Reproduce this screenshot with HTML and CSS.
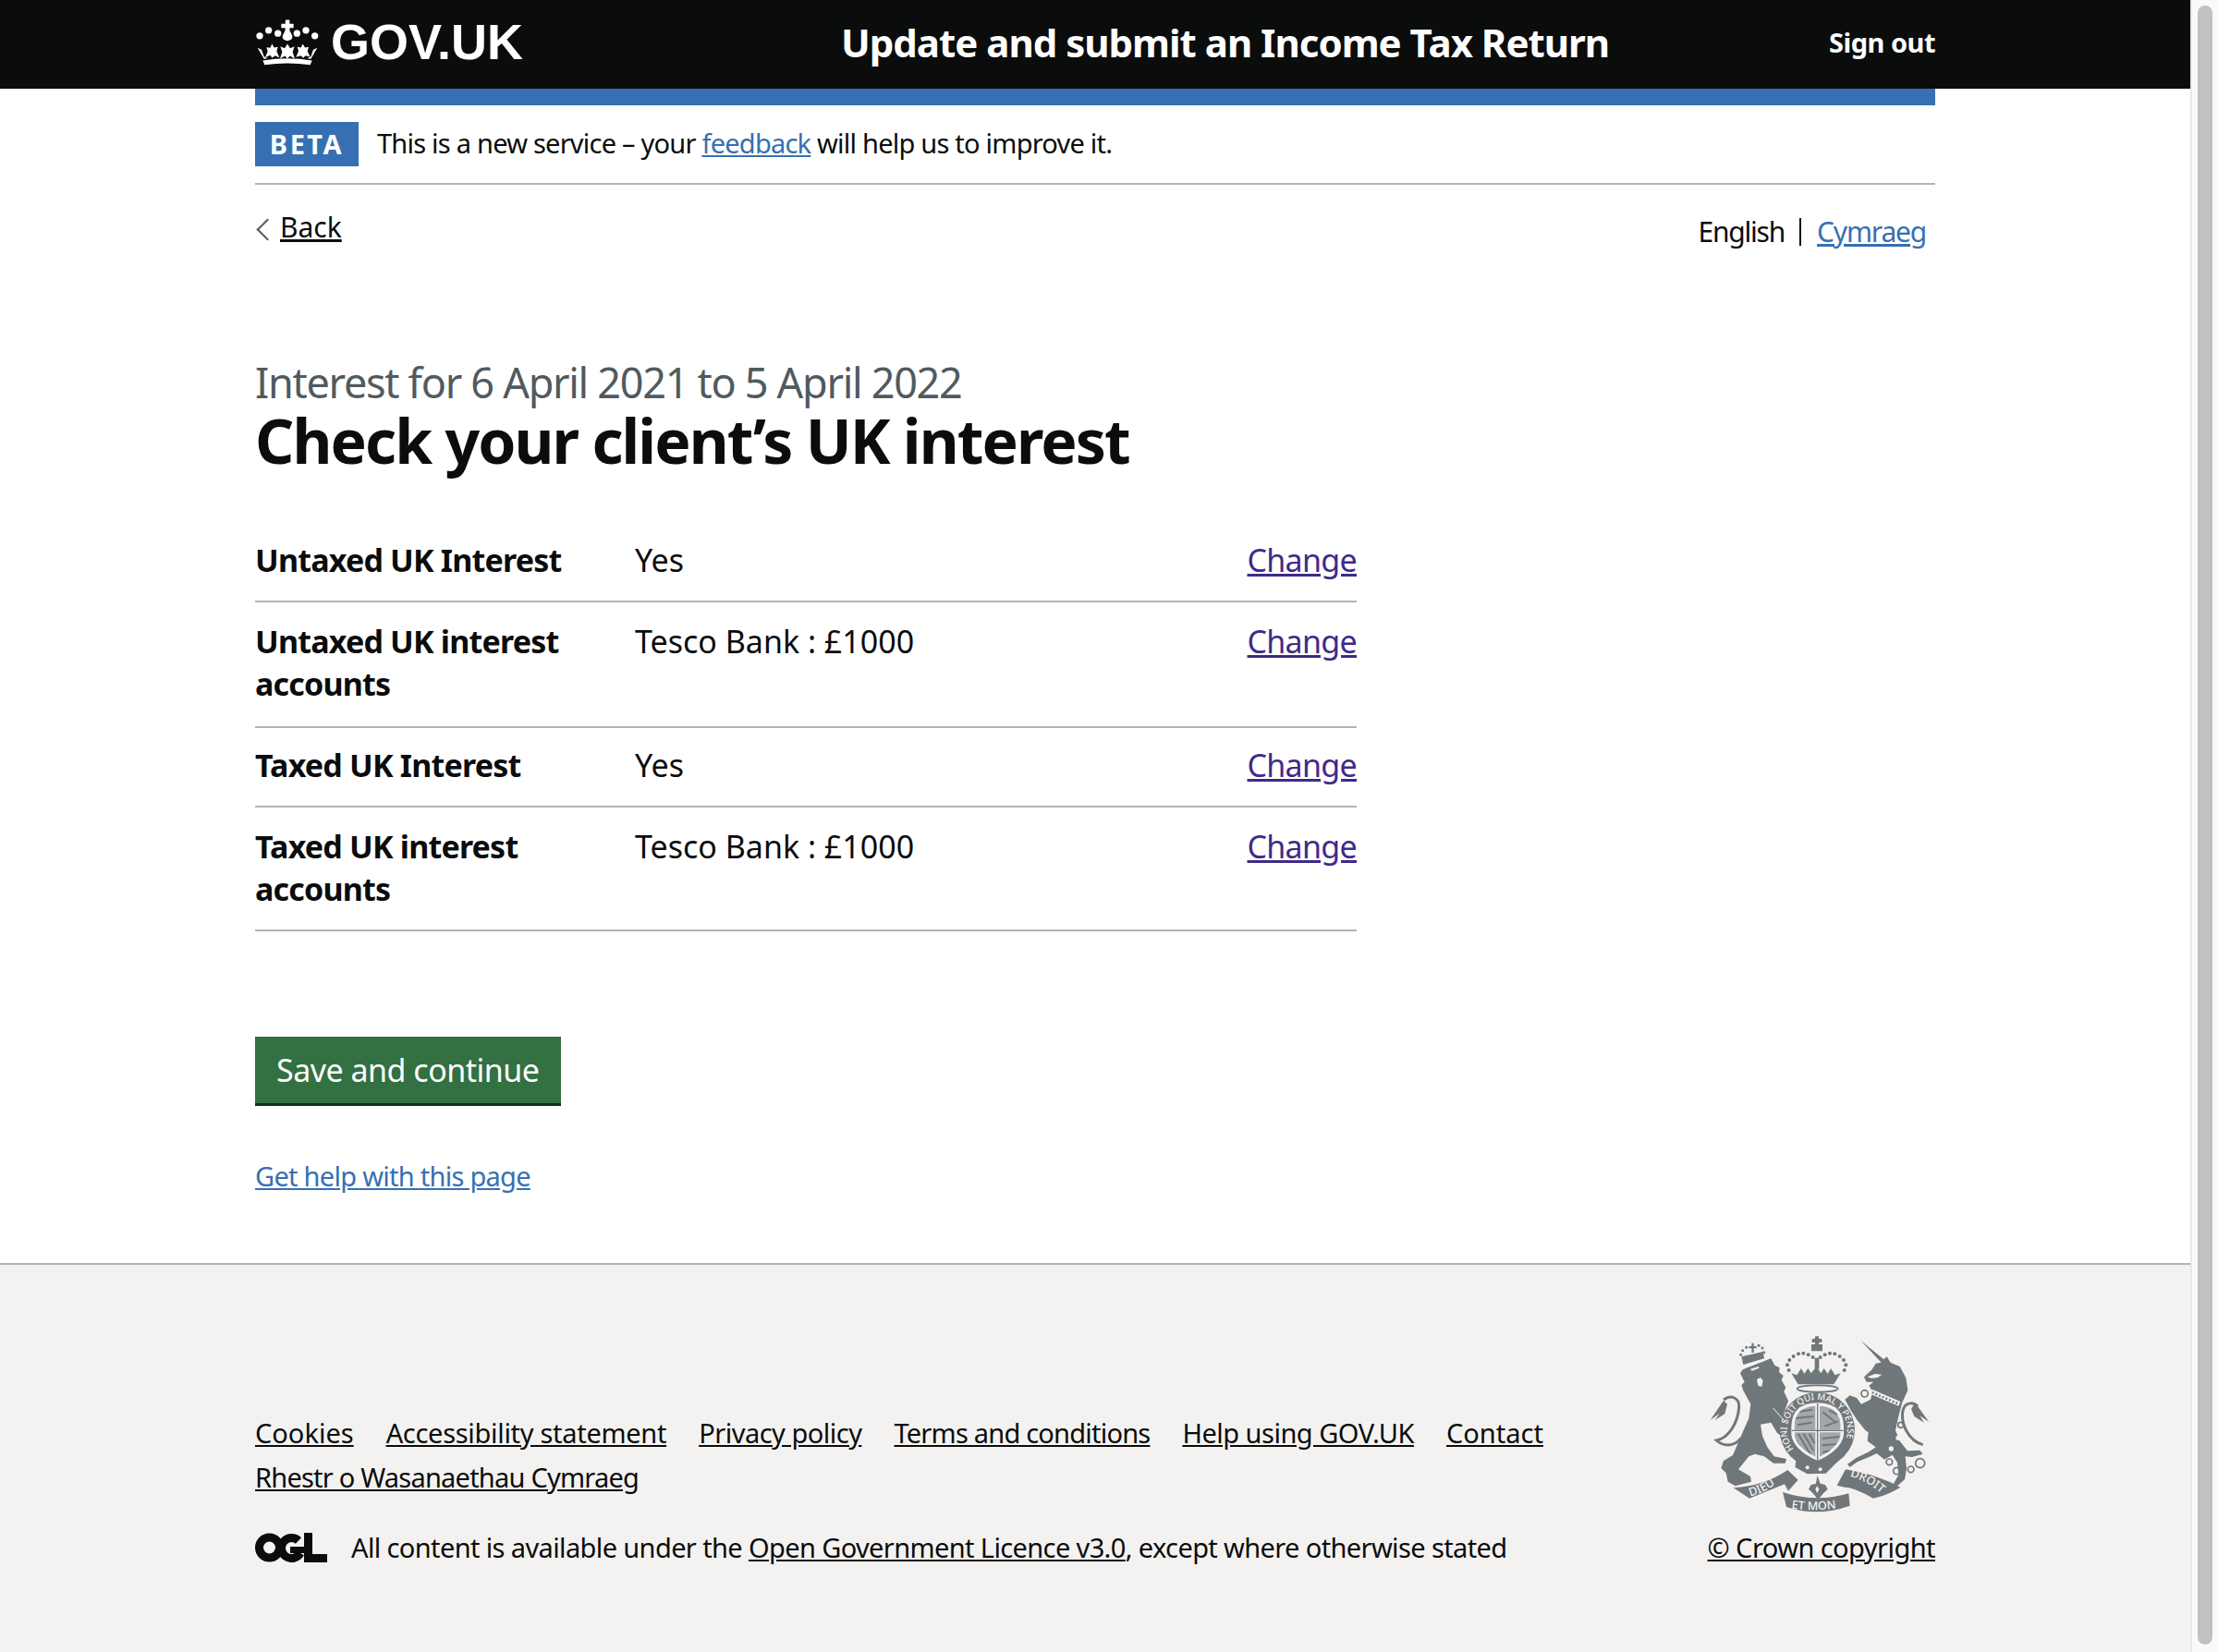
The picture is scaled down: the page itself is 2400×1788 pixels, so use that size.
FILE: index.html
```html
<!DOCTYPE html>
<html lang="en">
<head>
    <meta charset="UTF-8">
    <meta name="viewport" content="width=device-width, initial-scale=1.0">
    <title>Check your client's UK interest</title>
    <link rel="stylesheet" href="styles.css">
</head>
<body>
<div class="page">
    <header class="site-header">
        <div class="wrap header-inner">
            <a class="logo" href="#">
                <svg class="crown" viewBox="105 60 210 152" aria-hidden="true">
                    <g fill="#fff">
                        <circle cx="120" cy="116" r="11"/><circle cx="149" cy="98" r="11"/><circle cx="179" cy="108" r="11"/>
                        <circle cx="241" cy="108" r="11"/><circle cx="270" cy="98" r="11"/><circle cx="299" cy="116" r="11"/>
                        <path d="M204 64h13v13h13v13h-13v8l9 18q2 15-16 16q-18-1-16-16l9-18v-8h-13v-13h13z"/>
                        <path d="M210 142l9 14 14-6-6 18 7 22-16-9-8 9-8-9-16 9 7-22-6-18 14 6z"/>
                        <path d="M160 142l7 12 12-2-4 14 9 20-15-6-8 8-7-9-16 7 8-20-4-13 12 2z"/>
                        <path d="M260 142l7 12 12-2-4 14 9 18-15-4-8 8-7-8-16 5 8-20-4-13 12 2z"/>
                        <path d="M113 155l13 6 8 22 12 6-12 2zM307 155l-13 6-8 22-12 6 12 2z"/>
                        <path d="M130 196q80-14 160 0l-6 14q-74-10-148 0z"/>
                    </g>
                </svg>
                <span class="logo-text">GOV.UK</span>
            </a>
            <a class="service-name" href="#">Update and submit an Income Tax Return</a>
            <a class="sign-out" href="#">Sign out</a>
        </div>
    </header>

    <div class="wrap">
        <div class="header-rule"></div>
        <div class="phase-banner">
            <strong class="tag">BETA</strong>
            <span>This is a new service – your <a class="link" href="#">feedback</a> will help us to improve it.</span>
        </div>

        <div class="nav-row">
            <a class="back" href="#">Back</a>
            <ul class="lang">
                <li class="lang-current">English</li>
                <li><a class="link" href="#">Cymraeg</a></li>
            </ul>
        </div>

        <main class="content">
            <span class="caption">Interest for 6 April 2021 to 5 April 2022</span>
            <h1>Check your client’s UK interest</h1>

            <dl class="summary">
                <div class="row">
                    <dt>Untaxed UK Interest</dt>
                    <dd>Yes</dd>
                    <dd><a class="visited" href="#">Change</a></dd>
                </div>
                <div class="row">
                    <dt>Untaxed UK interest accounts</dt>
                    <dd>Tesco Bank : £1000</dd>
                    <dd><a class="visited" href="#">Change</a></dd>
                </div>
                <div class="row">
                    <dt>Taxed UK Interest</dt>
                    <dd>Yes</dd>
                    <dd><a class="visited" href="#">Change</a></dd>
                </div>
                <div class="row">
                    <dt>Taxed UK interest accounts</dt>
                    <dd>Tesco Bank : £1000</dd>
                    <dd><a class="visited" href="#">Change</a></dd>
                </div>
            </dl>

            <button class="button">Save and continue</button>
            <p class="help"><a class="link" href="#">Get help with this page</a></p>
        </main>
    </div>

    <footer class="site-footer">
        <div class="wrap footer-inner">
            <div class="footer-left">
                <ul class="footer-links">
                    <li><a href="#">Cookies</a></li>
                    <li><a href="#">Accessibility statement</a></li>
                    <li><a href="#">Privacy policy</a></li>
                    <li><a href="#">Terms and conditions</a></li>
                    <li><a href="#">Help using GOV.UK</a></li>
                    <li><a href="#">Contact</a></li>
                    <li><a href="#">Rhestr o Wasanaethau Cymraeg</a></li>
                </ul>
                <div class="licence">
                    <svg class="ogl" viewBox="0 0 78 32" aria-hidden="true">
                        <circle cx="15.5" cy="16" r="11" fill="none" stroke="#0b0c0c" stroke-width="9"/>
                        <path d="M47 8.5a11 11 0 1 0 2 13.500" fill="none" stroke="#0b0c0c" stroke-width="9"/>
                        <rect x="38" y="15" width="15" height="7" fill="#0b0c0c"/>
                        <path d="M53 0h9v23h16v9H53z" fill="#0b0c0c"/>
                    </svg>
                    <span>All content is available under the <a href="#">Open Government Licence v3.0</a>, except where otherwise stated</span>
                </div>
            </div>
            <div class="footer-right">
                <svg class="crest" viewBox="195 70 750 600" aria-hidden="true">
                    <defs>
                        <path id="garter" d="M486 446A98 98 0 1 1 638 446"/>
                        <path id="ribbonLeft" d="M345 600Q400 585 447 543"/>
                        <path id="ribbonMid" d="M478 638Q560 652 644 634"/>
                        <path id="ribbonRight" d="M668 535Q730 550 780 600"/>
                        <clipPath id="shieldClip">
                            <path d="M488 372Q490 306 563 306 636 306 638 372V400Q630 444 563 474 496 444 488 400Z"/>
                        </clipPath>
                    </defs>
                    <g fill="#6f777b">
                        <!-- lion -->
                        <path d="M320 188L412 152 424 174 440 182 438 196 452 208 446 222 460 246 454 260 468 290 458 318 452 330 470 370 474 414 462 416 432 394 412 360 378 366 384 404 400 440 422 470 462 478 458 492 420 492 390 470 360 462 340 470 306 512 345 535 348 552 296 566 272 552 266 524 250 508 258 484 288 466 312 410 340 346 346 300 322 256 316 238 326 228 312 200Z"/>
                        <path d="M258 288L215 352 245 330 230 352 262 332 270 300Z"/>
                        <!-- lion's crown -->
                        <path d="M322 172L316 146 386 130 390 152ZM340 112h9v-10h7v10h9v7h-9v14h-7v-14h-9z"/>
                        <circle cx="314" cy="140" r="4.500"/><circle cx="320" cy="126" r="4.500"/><circle cx="332" cy="116" r="4.500"/>
                        <circle cx="372" cy="110" r="4.500"/><circle cx="384" cy="118" r="4.500"/><circle cx="389" cy="132" r="4.500"/>
                        <!-- crown above shield -->
                        <path d="M555 80h12v8h10v12h-10v6h12v22h-36v-22h12v-6h-10V88h10z"/>
                        <path d="M554 150h14v36h-14z"/>
                        <path d="M478 200l18 6 14-22 10 18 12-18 10 16 18-22 14 22 10-16 12 18 10-18 14 22 18-6-22 36H500z"/>
                        <g>
                            <circle cx="470" cy="190" r="6"/><circle cx="465" cy="173" r="6"/><circle cx="472" cy="157" r="6"/><circle cx="485" cy="145" r="6"/>
                            <circle cx="501" cy="137" r="6"/><circle cx="517" cy="135" r="6"/><circle cx="533" cy="140" r="6"/><circle cx="548" cy="148" r="6"/>
                            <circle cx="572" cy="148" r="6"/><circle cx="587" cy="140" r="6"/><circle cx="603" cy="135" r="6"/><circle cx="619" cy="137" r="6"/>
                            <circle cx="635" cy="145" r="6"/><circle cx="648" cy="157" r="6"/><circle cx="655" cy="173" r="6"/><circle cx="650" cy="190" r="6"/>
                        </g>
                        <!-- garter ring and buckle -->
                        <circle cx="562" cy="384" r="122"/>
                        <path d="M495 470l145 5-50 50-60 2-40-22z"/>
                        <!-- unicorn -->
                        <path d="M703 93L778 155 788 146 800 165 830 178 850 215 856 255 838 295 826 340 816 385 830 420 855 452 895 450 905 462 870 472 848 470 852 510 846 545 815 572 806 566 826 530 822 490 806 465 780 480 755 460 735 470 692 488 668 505 660 495 688 475 730 455 752 440 725 420 728 392 718 385 690 350 672 322 652 285 668 272 690 280 705 300 735 285 742 260 730 240 745 228 722 228 714 212 740 188 752 168 770 165Z"/>
                        <path d="M880 296L925 358 895 338 909 360 877 340 867 316Z"/>
                    </g>
                    <g fill="none" stroke="#6f777b">
                        <path d="M315 410C290 442 255 436 235 418 275 410 305 360 308 310 310 280 282 268 258 286" stroke-width="9"/>
                        <path d="M905 432C860 420 832 365 840 322 845 296 872 290 888 308" stroke-width="9"/>
                        <g stroke-width="5">
                            <circle cx="716" cy="266" r="11"/><circle cx="707" cy="346" r="11"/><circle cx="833" cy="368" r="9"/>
                            <circle cx="796" cy="488" r="10"/><circle cx="820" cy="517" r="11"/><circle cx="866" cy="512" r="10"/><circle cx="896" cy="492" r="15"/>
                        </g>
                    </g>
                    <g fill="#f3f2f1">
                        <circle cx="825" cy="410" r="8"/><circle cx="802" cy="445" r="8"/>
                        <path d="M740 252L832 292 826 306 736 268Z"/>
                        <path d="M724 212l26-10 22 2-14 10-18 2z"/>
                        <path d="M366 220l12-6 8 10-4 20-12-4z"/>
                        <path d="M345 186l26-8 3 5-24 9z"/>
                        <ellipse cx="563" cy="250" rx="66" ry="11" stroke="#6f777b" stroke-width="5"/>
                    </g>
                    <path d="M418 312L464 364" stroke="#f3f2f1" stroke-width="3"/>
                    <path d="M740 262L828 300" stroke="#6f777b" stroke-width="7" stroke-dasharray="6 6"/>
                    <!-- shield -->
                    <path d="M478 372Q480 296 563 296 646 296 648 372V400Q640 450 563 484 486 450 478 400Z" fill="#f3f2f1"/>
                    <g clip-path="url(#shieldClip)">
                        <path d="M480 300h76v84h-76zM570 300h76v84h-76zM480 392h76v90h-76zM570 392h76v90h-76z" fill="#a2a7aa"/>
                        <g stroke="#6f777b" stroke-width="6" fill="none">
                            <path d="M496 326l50-8M492 346l58-6M498 368l46-8M580 326l40 32M600 320l28 14M586 372l44-16"/>
                            <path d="M578 412l56-6M578 434l52-4M580 456l36-6"/>
                            <path d="M500 396l40 68M518 396l32 56M536 396l18 32M492 418l28 44"/>
                        </g>
                    </g>
                    <path d="M563 298v186M480 386h166" stroke="#6f777b" stroke-width="4"/>
                    <text class="crest-text ring-text"><textPath href="#garter">HONI SOIT QUI MAL Y PENSE</textPath></text>
                    <circle cx="530" cy="506" r="6" fill="#f3f2f1"/><circle cx="572" cy="512" r="6" fill="#f3f2f1"/>
                    <!-- motto scroll -->
                    <path d="M290 572Q390 566 466 514L500 546 468 582 456 560 342 606z" fill="#6f777b"/>
                    <path d="M450 586Q560 622 664 590L668 630Q560 668 462 634z" fill="#6f777b"/>
                    <path d="M626 564L654 512Q760 530 832 570 790 596 744 606 680 570 652 570z" fill="#6f777b"/>
                    <path d="M562 532l10 26 16 4 8 14-14 14-14 16-6 0-14-16-14-14 8-14 16-4z" fill="#6f777b"/>
                    <path d="M562 566l6 10-6 14-6-14z" fill="#f3f2f1"/>
                    <text class="crest-text ribbon-text"><textPath href="#ribbonLeft">DIEU</textPath></text>
                    <text class="crest-text ribbon-text"><textPath href="#ribbonMid">ET MON</textPath></text>
                    <text class="crest-text ribbon-text"><textPath href="#ribbonRight">DROIT</textPath></text>
                </svg>
                <a class="copyright" href="#">© Crown copyright</a>
            </div>
        </div>
    </footer>
</div>
<div class="scrollbar"><div class="scrollbar-thumb"></div></div>
</body>
</html>
```

FILE: styles.css
```css
html, body {
    margin: 0;
    padding: 0;
    width: 2400px;
    height: 1788px;
    overflow: hidden;
    background: #fff;
    color: #0b0c0c;
    font-family: 'Noto Sans', Arial, sans-serif;
}
body {
    display: flex;
}
a {
    color: inherit;
}
ul {
    list-style: none;
    margin: 0;
    padding: 0;
}
.page {
    flex: 1;
    display: flex;
    flex-direction: column;
    min-width: 0;
}
.wrap {
    width: 1818px;
    margin: 0 auto;
}
.link {
    color: #3670b2;
}
.visited {
    color: #3f2a88;
    letter-spacing: -0.7px;
}

/* scrollbar */
.scrollbar {
    flex: none;
    width: 30px;
    padding: 6px 6px 8px 6px;
    box-sizing: border-box;
    background: #fafafa;
    border-left: 2px solid #e8e8e8;
}
.scrollbar-thumb {
    height: 100%;
    border-radius: 8px;
    background: #c1c1c1;
}

/* header */
.site-header {
    background: #0b0c0c;
    height: 96px;
    color: #fff;
}
.header-inner {
    display: flex;
    align-items: center;
    height: 90px;
}
.site-header a {
    text-decoration: none;
    color: #fff;
}
.logo {
    display: flex;
    align-items: center;
    width: 634px;
    flex: none;
}
.crown {
    width: 70px;
    height: 51px;
    margin-right: 12px;
}
.logo-text {
    font-family: 'Liberation Sans', Arial, sans-serif;
    font-weight: 700;
    font-size: 54px;
    letter-spacing: 0;
    line-height: 1;
}
.service-name {
    font-weight: 700;
    font-size: 42px;
    letter-spacing: -1px;
}
.sign-out {
    margin-left: auto;
    font-weight: 700;
    font-size: 29px;
    letter-spacing: -0.5px;
}
.header-rule {
    height: 18px;
    background: #3670b2;
}

/* beta banner */
.phase-banner {
    display: flex;
    align-items: center;
    gap: 20px;
    padding: 18px 0;
    border-bottom: 2px solid #b1b4b6;
    font-size: 29px;
    letter-spacing: -0.77px;
}
.phase-banner span {
    position: relative;
    top: -2px;
}
.tag {
    display: block;
    width: 112px;
    height: 48px;
    line-height: 48px;
    text-align: center;
    background: #3670b2;
    color: #fff;
    font-size: 29px;
    letter-spacing: 2.5px;
}

/* back + language */
.nav-row {
    display: flex;
    justify-content: space-between;
    padding-top: 25px;
    font-size: 30px;
    height: 120px;
    box-sizing: border-box;
}
.back {
    position: relative;
    margin-left: 27px;
    height: 40px;
}
.back::before {
    content: '';
    position: absolute;
    left: -22px;
    top: 15px;
    width: 15px;
    height: 15px;
    border-left: 2px solid #505a5f;
    border-bottom: 2px solid #505a5f;
    transform: rotate(45deg);
}
.lang {
    display: flex;
    height: 30px;
    margin: 11px 10px 0 0;
    line-height: 30px;
    align-items: center;
    letter-spacing: -1.2px;
}
.lang-current {
    padding-right: 16px;
    margin-right: 17px;
    border-right: 2px solid #0b0c0c;
}

/* main */
.content {
    padding-top: 68px;
}
.caption {
    display: block;
    font-size: 45px;
    line-height: 52px;
    letter-spacing: -1.3px;
    color: #505a5f;
}
h1 {
    margin: 0 0 52px 0;
    font-size: 66px;
    line-height: 72px;
    font-weight: 700;
    letter-spacing: -1.9px;
}
.summary {
    width: 1192px;
    margin: 0 0 114px 0;
    font-size: 34px;
    line-height: 46px;
}
.row {
    display: grid;
    grid-template-columns: 411px 1fr auto;
    padding: 19px 0;
    border-bottom: 2px solid #b1b4b6;
}
.row:nth-child(1) {
    padding-bottom: 21px;
}
.row:nth-child(2) {
    padding-bottom: 23px;
}
.row:nth-child(3) {
    padding: 17px 0 21px;
}
.row:nth-child(4) {
    padding-bottom: 21px;
}
.row dt {
    font-weight: 700;
    letter-spacing: -0.8px;
}
.row dd {
    margin: 0;
}
.button {
    display: block;
    height: 75px;
    padding: 0 23px;
    border: 0;
    border-bottom: 3px solid #123018;
    background: #337042;
    color: #fff;
    font: inherit;
    font-size: 34px;
    letter-spacing: -0.5px;
}
.help {
    margin: 58px 0 0 0;
    font-size: 29px;
    line-height: 36px;
    letter-spacing: -0.72px;
}

/* footer */
.site-footer {
    flex: 1;
    margin-top: 76px;
    background: #f3f2f1;
    border-top: 2px solid #b1b4b6;
}
.footer-inner {
    display: flex;
    justify-content: space-between;
    align-items: flex-end;
    padding-top: 74px;
}
.footer-left {
    width: 1500px;
    font-size: 29px;
}
.footer-links {
    display: flex;
    flex-wrap: wrap;
    gap: 0 35px;
    line-height: 48px;
    letter-spacing: -0.5px;
}
.footer-links li:nth-child(1),
.footer-links li:nth-child(6) {
    letter-spacing: 0;
}
.footer-links li:nth-child(2) {
    letter-spacing: -0.3px;
}
.footer-links li:nth-child(4),
.footer-links li:nth-child(7) {
    letter-spacing: -0.78px;
}
.licence {
    display: flex;
    align-items: center;
    gap: 26px;
    margin-top: 32px;
    line-height: 40px;
    letter-spacing: -0.62px;
}
.ogl {
    width: 78px;
    height: 32px;
    flex: none;
}
.footer-right {
    display: flex;
    flex-direction: column;
    align-items: flex-end;
}
.crest {
    width: 250px;
    height: 200px;
}
.copyright {
    font-size: 29px;
    line-height: 40px;
    margin-top: 12px;
    letter-spacing: -0.55px;
}
.crest-text {
    fill: #f3f2f1;
    font-family: 'Noto Sans', sans-serif;
    font-weight: 500;
}
.ring-text {
    font-size: 29px;
}
.ribbon-text {
    font-size: 38px;
}
```
